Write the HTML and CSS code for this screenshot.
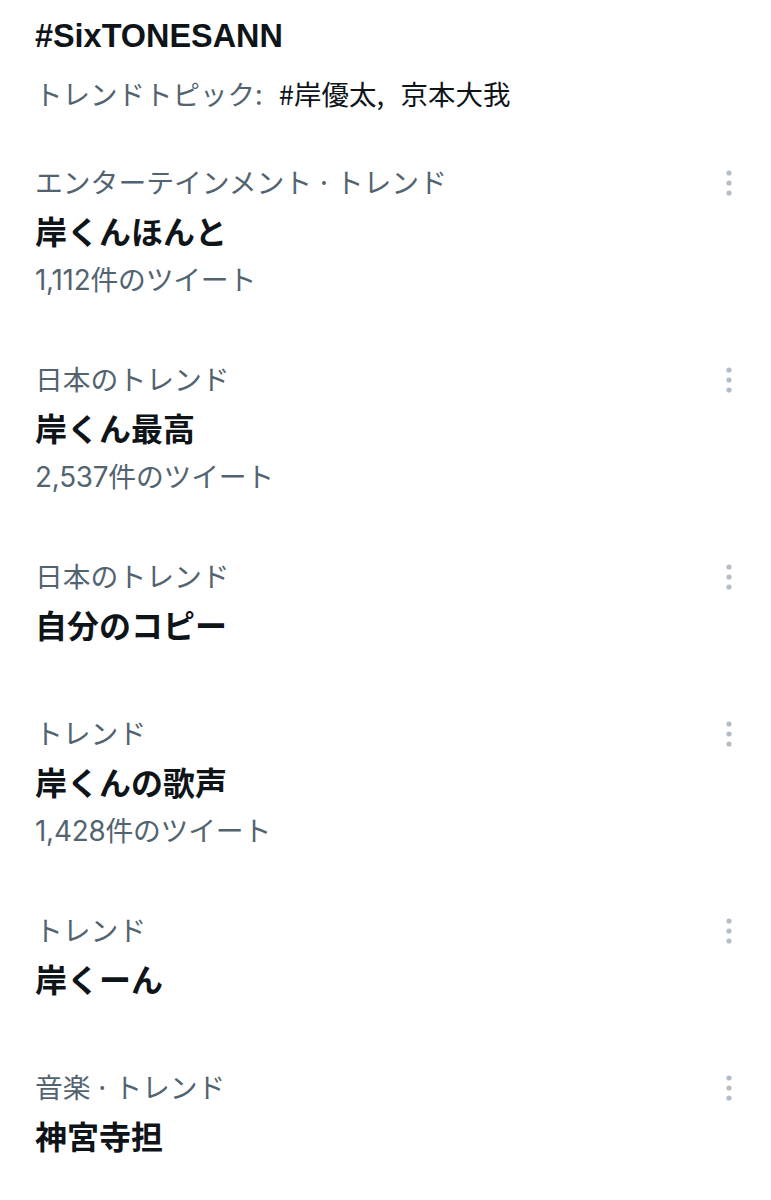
FILE: index.html
```html
<!DOCTYPE html>
<html lang="ja">
<head>
<meta charset="utf-8">
<link rel="stylesheet" href="styles.css">
</head>
<body>
<main class="page">
  <header class="head">
    <div class="title">#SixTONESANN</div>
    <div class="topic"><span class="muted">トレンドトピック: </span>#岸優太, 京本大我</div>
  </header>

  <section class="item">
    <div class="body">
      <div class="cat">エンターテインメント<span class="dot">·</span>トレンド</div>
      <div class="name">岸くんほんと</div>
      <div class="count">1,112件のツイート</div>
    </div>
    <svg class="more" viewBox="0 0 6 26" width="6" height="26"><circle cx="3" cy="3" r="2.6"/><circle cx="3" cy="13" r="2.6"/><circle cx="3" cy="23" r="2.6"/></svg>
  </section>

  <section class="item">
    <div class="body">
      <div class="cat">日本のトレンド</div>
      <div class="name">岸くん最高</div>
      <div class="count">2,537件のツイート</div>
    </div>
    <svg class="more" viewBox="0 0 6 26" width="6" height="26"><circle cx="3" cy="3" r="2.6"/><circle cx="3" cy="13" r="2.6"/><circle cx="3" cy="23" r="2.6"/></svg>
  </section>

  <section class="item">
    <div class="body">
      <div class="cat">日本のトレンド</div>
      <div class="name">自分のコピー</div>
    </div>
    <svg class="more" viewBox="0 0 6 26" width="6" height="26"><circle cx="3" cy="3" r="2.6"/><circle cx="3" cy="13" r="2.6"/><circle cx="3" cy="23" r="2.6"/></svg>
  </section>

  <section class="item">
    <div class="body">
      <div class="cat">トレンド</div>
      <div class="name">岸くんの歌声</div>
      <div class="count">1,428件のツイート</div>
    </div>
    <svg class="more" viewBox="0 0 6 26" width="6" height="26"><circle cx="3" cy="3" r="2.6"/><circle cx="3" cy="13" r="2.6"/><circle cx="3" cy="23" r="2.6"/></svg>
  </section>

  <section class="item">
    <div class="body">
      <div class="cat">トレンド</div>
      <div class="name">岸くーん</div>
    </div>
    <svg class="more" viewBox="0 0 6 26" width="6" height="26"><circle cx="3" cy="3" r="2.6"/><circle cx="3" cy="13" r="2.6"/><circle cx="3" cy="23" r="2.6"/></svg>
  </section>

  <section class="item">
    <div class="body">
      <div class="cat">音楽<span class="dot">·</span>トレンド</div>
      <div class="name">神宮寺担</div>
    </div>
    <svg class="more" viewBox="0 0 6 26" width="6" height="26"><circle cx="3" cy="3" r="2.6"/><circle cx="3" cy="13" r="2.6"/><circle cx="3" cy="23" r="2.6"/></svg>
  </section>
</main>
</body>
</html>
```

FILE: styles.css
```css
html, body {
  margin: 0;
  padding: 0;
  background: #ffffff;
}

body {
  font-family: "Noto Sans CJK JP", sans-serif;
  color: #0f1419;
}

.page {
  padding: 16px 39px 0 35px;
  display: flex;
  flex-direction: column;
}

.head {
  display: flex;
  flex-direction: column;
  margin-bottom: 48px;
}

.title {
  font-family: "Liberation Sans", "Noto Sans CJK JP", sans-serif;
  font-size: 32.4px;
  font-weight: 700;
  line-height: 40px;
  color: #0f1419;
}

.topic {
  margin-top: 17px;
  font-size: 27.5px;
  line-height: 40px;
  word-spacing: 10px;
  color: #0f1419;
}

.muted {
  color: #536471;
}

.item {
  display: flex;
  align-items: flex-start;
  justify-content: space-between;
  padding-bottom: 68px;
}

.body {
  display: flex;
  flex-direction: column;
}

.cat {
  font-size: 27.8px;
  line-height: 40px;
  color: #536471;
}

.dot {
  margin: 0 4px;
}

.name {
  margin-top: 9px;
  font-size: 32px;
  font-weight: 700;
  line-height: 40px;
  color: #0f1419;
}

.count {
  margin-top: 20px;
  font-family: "Inter", "Noto Sans CJK JP", sans-serif;
  font-size: 27.8px;
  line-height: 20px;
  letter-spacing: -0.2px;
  color: #536471;
}

.more {
  margin-top: 9px;
  fill: #b4bec6;
  flex-shrink: 0;
}
```
